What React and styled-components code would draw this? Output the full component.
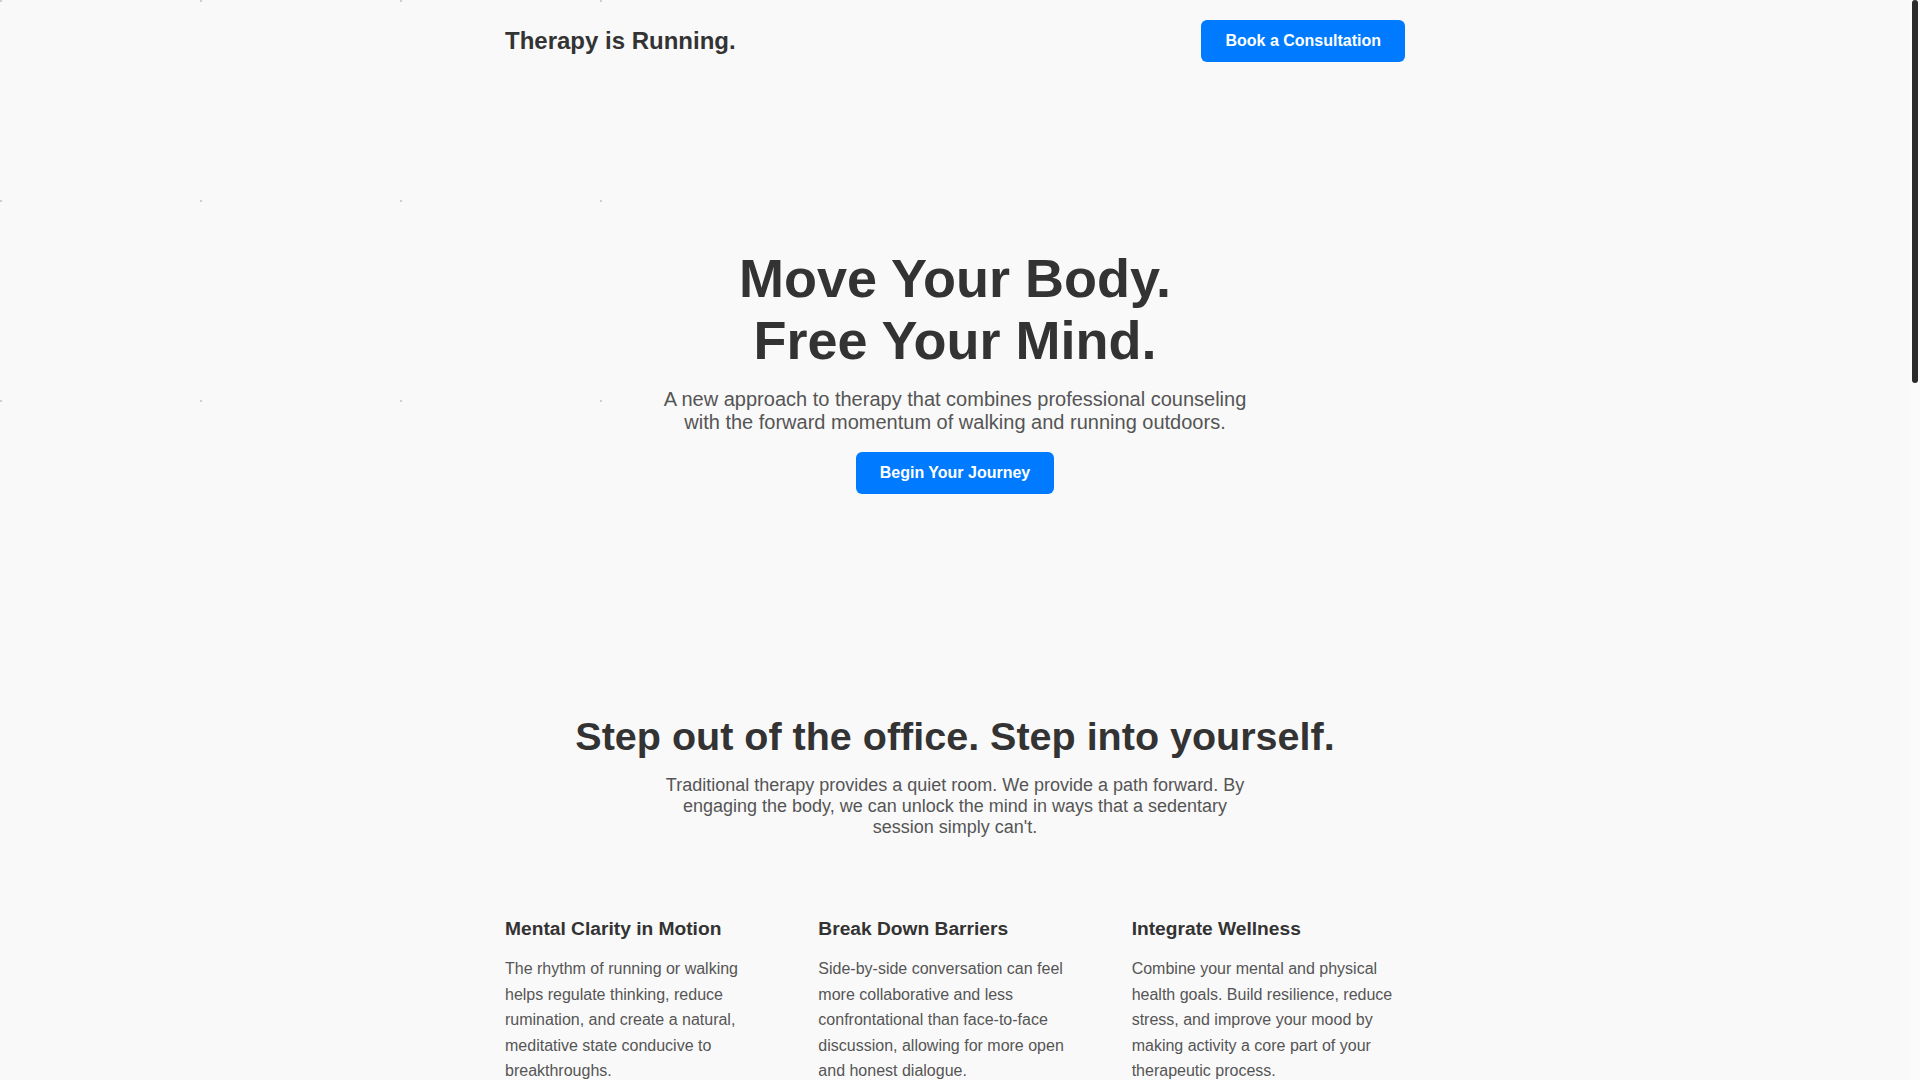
import React from "react";
import styled, { createGlobalStyle } from "styled-components";

const GlobalStyle = createGlobalStyle`
  * { box-sizing: border-box; }
  html, body {
    margin: 0;
    padding: 0;
    background: #f9f9f9;
    color: #333;
    font-family: "Liberation Sans", Arial, sans-serif;
  }
`;

const Page = styled.div`
  position: relative;
  min-height: 3045px;
  padding-right: 10px;
`;

const ScrollTrack = styled.div`
  position: fixed;
  top: 0;
  right: 0;
  width: 10px;
  height: 100vh;
  background: #fbfbfb;
  z-index: 5;
`;

const ScrollThumb = styled.div`
  position: absolute;
  top: 0;
  left: 2px;
  width: 6px;
  height: 383px;
  border-radius: 3px;
  background: #2b2b2b;
`;

const DotField = styled.div`
  position: absolute;
  top: 0;
  left: 0;
  width: 602px;
  height: 402px;
  pointer-events: none;
  background-image: radial-gradient(circle at 1px 1px, #cfcfcf 1px, transparent 1.6px);
  background-size: 200px 200px;
  z-index: 0;
`;

const Container = styled.div`
  position: relative;
  z-index: 1;
  max-width: 900px;
  margin: 0 auto;
`;

const Header = styled.header`
  display: flex;
  align-items: center;
  justify-content: space-between;
  padding: 20px 0;
`;

const Logo = styled.div`
  font-size: 24px;
  font-weight: 700;
  color: #333;
`;

const Button = styled.a`
  display: inline-block;
  background: #007bff;
  color: #fff;
  font-size: 16px;
  font-weight: 700;
  line-height: normal;
  padding: 12px 24px;
  border-radius: 6px;
  text-decoration: none;
  cursor: pointer;
`;

const Hero = styled.section`
  text-align: center;
  padding: 165px 0 160px;
`;

const HeroTitle = styled.h1`
  margin: 0;
  font-size: 54px;
  line-height: 1.15;
  font-weight: 700;
  color: #333;
`;

const HeroText = styled.p`
  max-width: 600px;
  margin: 17px auto 17.5px;
  font-size: 20px;
  color: #555;
`;

const Features = styled.section`
  padding-top: 59px;
  text-align: center;
`;

const SectionTitle = styled.h2`
  margin: 0;
  font-size: 39.5px;
  line-height: 1.2;
  font-weight: 700;
  color: #333;
`;

const SectionText = styled.p`
  max-width: 600px;
  margin: 15px auto 0;
  font-size: 18px;
  color: #555;
`;

const Grid = styled.div`
  display: grid;
  grid-template-columns: repeat(3, 1fr);
  gap: 40px;
  margin-top: 80px;
  text-align: left;
`;

const Card = styled.article``;

const CardTitle = styled.h3`
  margin: 0 0 16px;
  font-size: 19.2px;
  font-weight: 700;
  color: #333;
`;

const CardText = styled.p`
  margin: 0;
  font-size: 16px;
  line-height: 1.6;
  color: #555;
`;

const cards = [
  {
    title: "Mental Clarity in Motion",
    text: "The rhythm of running or walking helps regulate thinking, reduce rumination, and create a natural, meditative state conducive to breakthroughs.",
  },
  {
    title: "Break Down Barriers",
    text: "Side-by-side conversation can feel more collaborative and less confrontational than face-to-face discussion, allowing for more open and honest dialogue.",
  },
  {
    title: "Integrate Wellness",
    text: "Combine your mental and physical health goals. Build resilience, reduce stress, and improve your mood by making activity a core part of your therapeutic process.",
  },
];

export default function App() {
  return (
    <Page>
      <GlobalStyle />
      <DotField />
      <ScrollTrack>
        <ScrollThumb />
      </ScrollTrack>
      <Container>
        <Header>
          <Logo>Therapy is Running.</Logo>
          <Button>Book a Consultation</Button>
        </Header>
        <Hero>
          <HeroTitle>
            Move Your Body.
            <br />
            Free Your Mind.
          </HeroTitle>
          <HeroText>
            A new approach to therapy that combines professional counseling with the forward momentum of walking and running outdoors.
          </HeroText>
          <Button>Begin Your Journey</Button>
        </Hero>
        <Features>
          <SectionTitle>Step out of the office. Step into yourself.</SectionTitle>
          <SectionText>
            Traditional therapy provides a quiet room. We provide a path forward. By engaging the body, we can unlock the mind in ways that a sedentary session simply can't.
          </SectionText>
          <Grid>
            {cards.map((c) => (
              <Card key={c.title}>
                <CardTitle>{c.title}</CardTitle>
                <CardText>{c.text}</CardText>
              </Card>
            ))}
          </Grid>
        </Features>
      </Container>
    </Page>
  );
}
